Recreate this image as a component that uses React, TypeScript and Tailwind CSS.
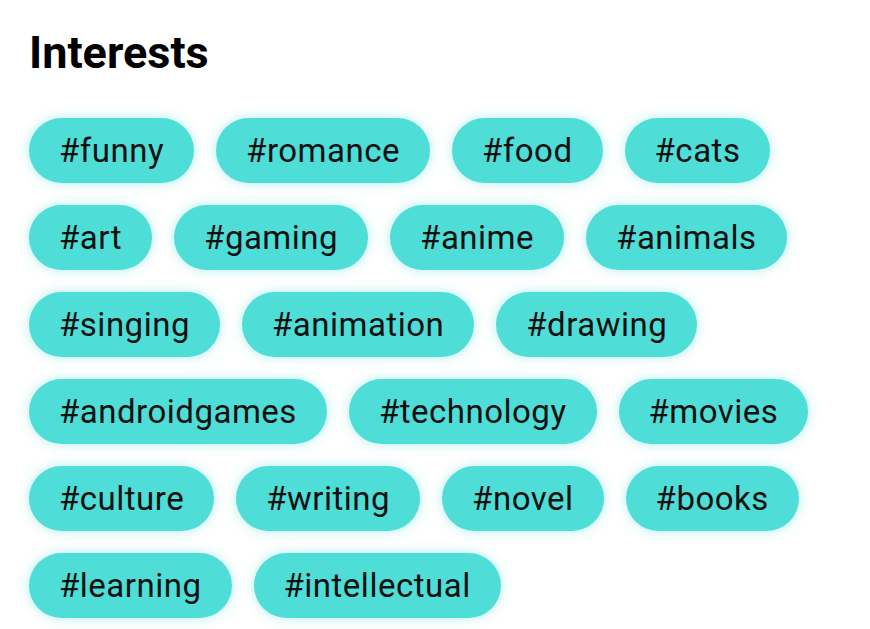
const interests = [
  "funny",
  "romance",
  "food",
  "cats",
  "art",
  "gaming",
  "anime",
  "animals",
  "singing",
  "animation",
  "drawing",
  "androidgames",
  "technology",
  "movies",
  "culture",
  "writing",
  "novel",
  "books",
  "learning",
  "intellectual",
];

function Chip({ label }: { label: string }) {
  return (
    <span className="flex items-center h-[65px] px-[30px] rounded-full bg-[#4fddd7] text-[#111] text-[33px] tracking-[0.5px] shadow-[0_0_12px_rgba(79,221,215,0.45)]">
      #{label}
    </span>
  );
}

export default function App() {
  return (
    <div className="min-h-screen bg-white px-[29px] pt-[30px] font-['Roboto',sans-serif]">
      <h1 className="text-[45px] leading-none font-bold text-black">Interests</h1>
      <div className="mt-[43px] flex flex-wrap gap-[22px]">
        {interests.map((t) => (
          <Chip key={t} label={t} />
        ))}
      </div>
    </div>
  );
}
